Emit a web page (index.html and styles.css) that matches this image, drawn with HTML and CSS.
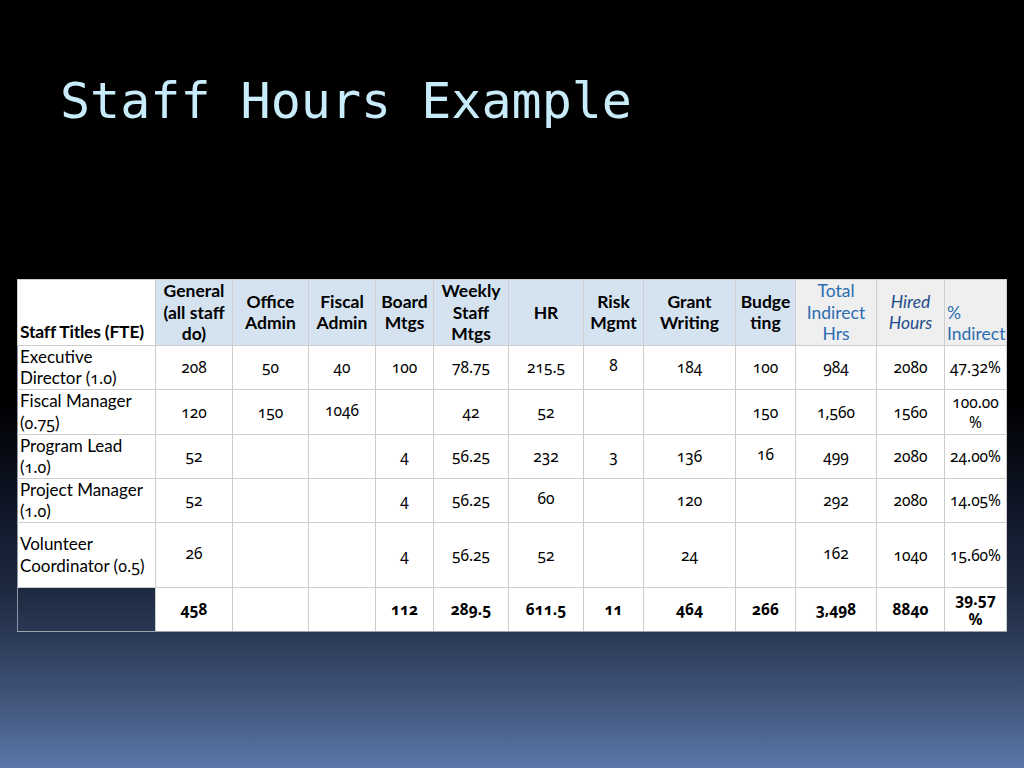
FILE: index.html
```html
<!DOCTYPE html>
<html>
<head>
<meta charset="utf-8">
<title>Staff Hours Example</title>
<link rel="stylesheet" href="styles.css">
</head>
<body>
<div class="slide">
  <h1 class="title">Staff Hours Example</h1>
  <table class="hours">
    <colgroup>
      <col class="c-title"><col class="c-gen"><col class="c-office"><col class="c-fiscal"><col class="c-board"><col class="c-weekly"><col class="c-hr"><col class="c-risk"><col class="c-grant"><col class="c-budget"><col class="c-total"><col class="c-hired"><col class="c-pct">
    </colgroup>
    <thead>
      <tr class="head">
        <th class="h-title">Staff Titles (FTE)</th>
        <th class="h-blue">General<br>(all staff<br>do)</th>
        <th class="h-blue">Office<br>Admin</th>
        <th class="h-blue">Fiscal<br>Admin</th>
        <th class="h-blue">Board<br>Mtgs</th>
        <th class="h-blue">Weekly<br>Staff<br>Mtgs</th>
        <th class="h-blue">HR</th>
        <th class="h-blue">Risk<br>Mgmt</th>
        <th class="h-blue">Grant<br>Writing</th>
        <th class="h-blue">Budge<br>ting</th>
        <th class="h-gray h-total">Total<br>Indirect<br>Hrs</th>
        <th class="h-gray h-hired">Hired<br>Hours</th>
        <th class="h-gray h-pct">%<br>Indirect</th>
      </tr>
    </thead>
    <tbody>
      <tr class="r44">
        <td class="name">Executive<br>Director (<span class="os">1.0</span>)</td>
        <td class="n">208</td><td class="n">50</td><td class="n">40</td><td class="n">100</td><td class="n">78.75</td><td class="n">215.5</td><td class="n up">8</td><td class="n">184</td><td class="n">100</td><td class="n">984</td><td class="n">2080</td><td class="n pct">47.32%</td>
      </tr>
      <tr class="r45">
        <td class="name">Fiscal Manager<br>(<span class="os">0.75</span>)</td>
        <td class="n">120</td><td class="n">150</td><td class="n up">1046</td><td class="n"></td><td class="n">42</td><td class="n">52</td><td class="n"></td><td class="n"></td><td class="n">150</td><td class="n">1,560</td><td class="n">1560</td><td class="n pct wrap">100.00<br>%</td>
      </tr>
      <tr class="r44">
        <td class="name">Program Lead<br>(<span class="os">1.0</span>)</td>
        <td class="n">52</td><td class="n"></td><td class="n"></td><td class="n">4</td><td class="n">56.25</td><td class="n">232</td><td class="n">3</td><td class="n">136</td><td class="n up">16</td><td class="n">499</td><td class="n">2080</td><td class="n pct">24.00%</td>
      </tr>
      <tr class="r44">
        <td class="name">Project Manager<br>(<span class="os">1.0</span>)</td>
        <td class="n">52</td><td class="n"></td><td class="n"></td><td class="n">4</td><td class="n">56.25</td><td class="n up">60</td><td class="n"></td><td class="n">120</td><td class="n"></td><td class="n">292</td><td class="n">2080</td><td class="n pct">14.05%</td>
      </tr>
      <tr class="r65">
        <td class="name">Volunteer<br>Coordinator (<span class="os">0.5</span>)</td>
        <td class="n up">26</td><td class="n"></td><td class="n"></td><td class="n">4</td><td class="n">56.25</td><td class="n">52</td><td class="n"></td><td class="n">24</td><td class="n"></td><td class="n up">162</td><td class="n">1040</td><td class="n pct">15.60%</td>
      </tr>
      <tr class="r44 total">
        <td class="blank"></td>
        <td class="n">458</td><td class="n"></td><td class="n"></td><td class="n">112</td><td class="n">289.5</td><td class="n">611.5</td><td class="n">11</td><td class="n">464</td><td class="n">266</td><td class="n">3,498</td><td class="n">8840</td><td class="n pct wrap">39.57<br>%</td>
      </tr>
    </tbody>
  </table>
</div>
</body>
</html>
```

FILE: styles.css
```css
html, body {
  margin: 0;
  padding: 0;
}

body {
  width: 1024px;
  height: 768px;
  overflow: hidden;
  background: linear-gradient(to bottom, #000 0%, #000 52%, #10172a 67%, #1e2a41 77%, #2b3a56 83%, #44587f 92%, #5b77a8 100%);
}

.slide {
  width: 1024px;
  height: 768px;
  padding: 71px 0 0 17px;
  box-sizing: border-box;
}

.title {
  margin: 0 0 0 43px;
  font-family: "DejaVu Sans Mono", monospace;
  font-weight: normal;
  font-size: 50px;
  line-height: 60px;
  color: #c9ecfa;
  height: 60px;
}

.hours {
  margin-top: 148px;
  width: 989px;
  table-layout: fixed;
  border-collapse: collapse;
  font-family: "Lato", "Liberation Sans", sans-serif;
  font-size: 17px;
  color: #000;
}

.c-title { width: 138px; }
.c-gen { width: 77px; }
.c-office { width: 76px; }
.c-fiscal { width: 67px; }
.c-board { width: 58px; }
.c-weekly { width: 75px; }
.c-hr { width: 75px; }
.c-risk { width: 60px; }
.c-grant { width: 92px; }
.c-budget { width: 60px; }
.c-total { width: 81px; }
.c-hired { width: 68px; }
.c-pct { width: 62px; }

.hours th,
.hours td {
  border: 1px solid #cdcdcd;
  padding: 0 2px;
  overflow: hidden;
}

.head {
  height: 65px;
}

.head th {
  font-weight: bold;
  font-size: 17.5px;
  line-height: 21.5px;
  text-align: center;
  vertical-align: middle;
  white-space: nowrap;
}

.h-title {
  background: #fff;
  text-align: left !important;
  vertical-align: bottom !important;
  padding: 0 0 2px 2px !important;
  letter-spacing: -0.2px;
}

.h-blue {
  background: #d5e3f1;
}

.h-gray {
  background: #efefef;
  font-weight: normal !important;
}

.h-total {
  color: #2c6cb0;
}

.h-hired {
  color: #1f4d8c;
  font-style: italic;
}

.h-pct {
  color: #2c6cb0;
  text-align: left !important;
  vertical-align: bottom !important;
  padding: 0 0 0 2px !important;
}

.hours tbody td {
  background: #fff;
}

.r44 { height: 44px; }
.r45 { height: 45px; }
.r65 { height: 65px; }

.name {
  text-align: left;
  vertical-align: middle;
  line-height: 21.5px;
  padding: 0 0 0 2px !important;
  white-space: nowrap;
}

.os {
  font-family: "Noto Sans", sans-serif;
  font-variant-numeric: oldstyle-nums;
  font-size: 16px;
  line-height: 1;
}

.n {
  font-family: "Noto Sans", "Lato", sans-serif;
  font-variant-numeric: oldstyle-nums;
  font-size: 15.5px;
  text-align: center;
  vertical-align: middle;
  line-height: 20px;
}

.up {
  padding-bottom: 4px !important;
}

.pct {
  white-space: nowrap;
  padding: 0 1px !important;
}

.wrap {
  line-height: 20px;
}

.total .n {
  font-weight: bold;
}

.hours tbody tr.total td.blank {
  background: transparent;
  border-left-color: #8c96a2;
}

.hours tbody td.name {
  border-left-color: #8c96a2;
}

.hours tr.total td {
  border-bottom-color: #9aa3ae;
}
```
